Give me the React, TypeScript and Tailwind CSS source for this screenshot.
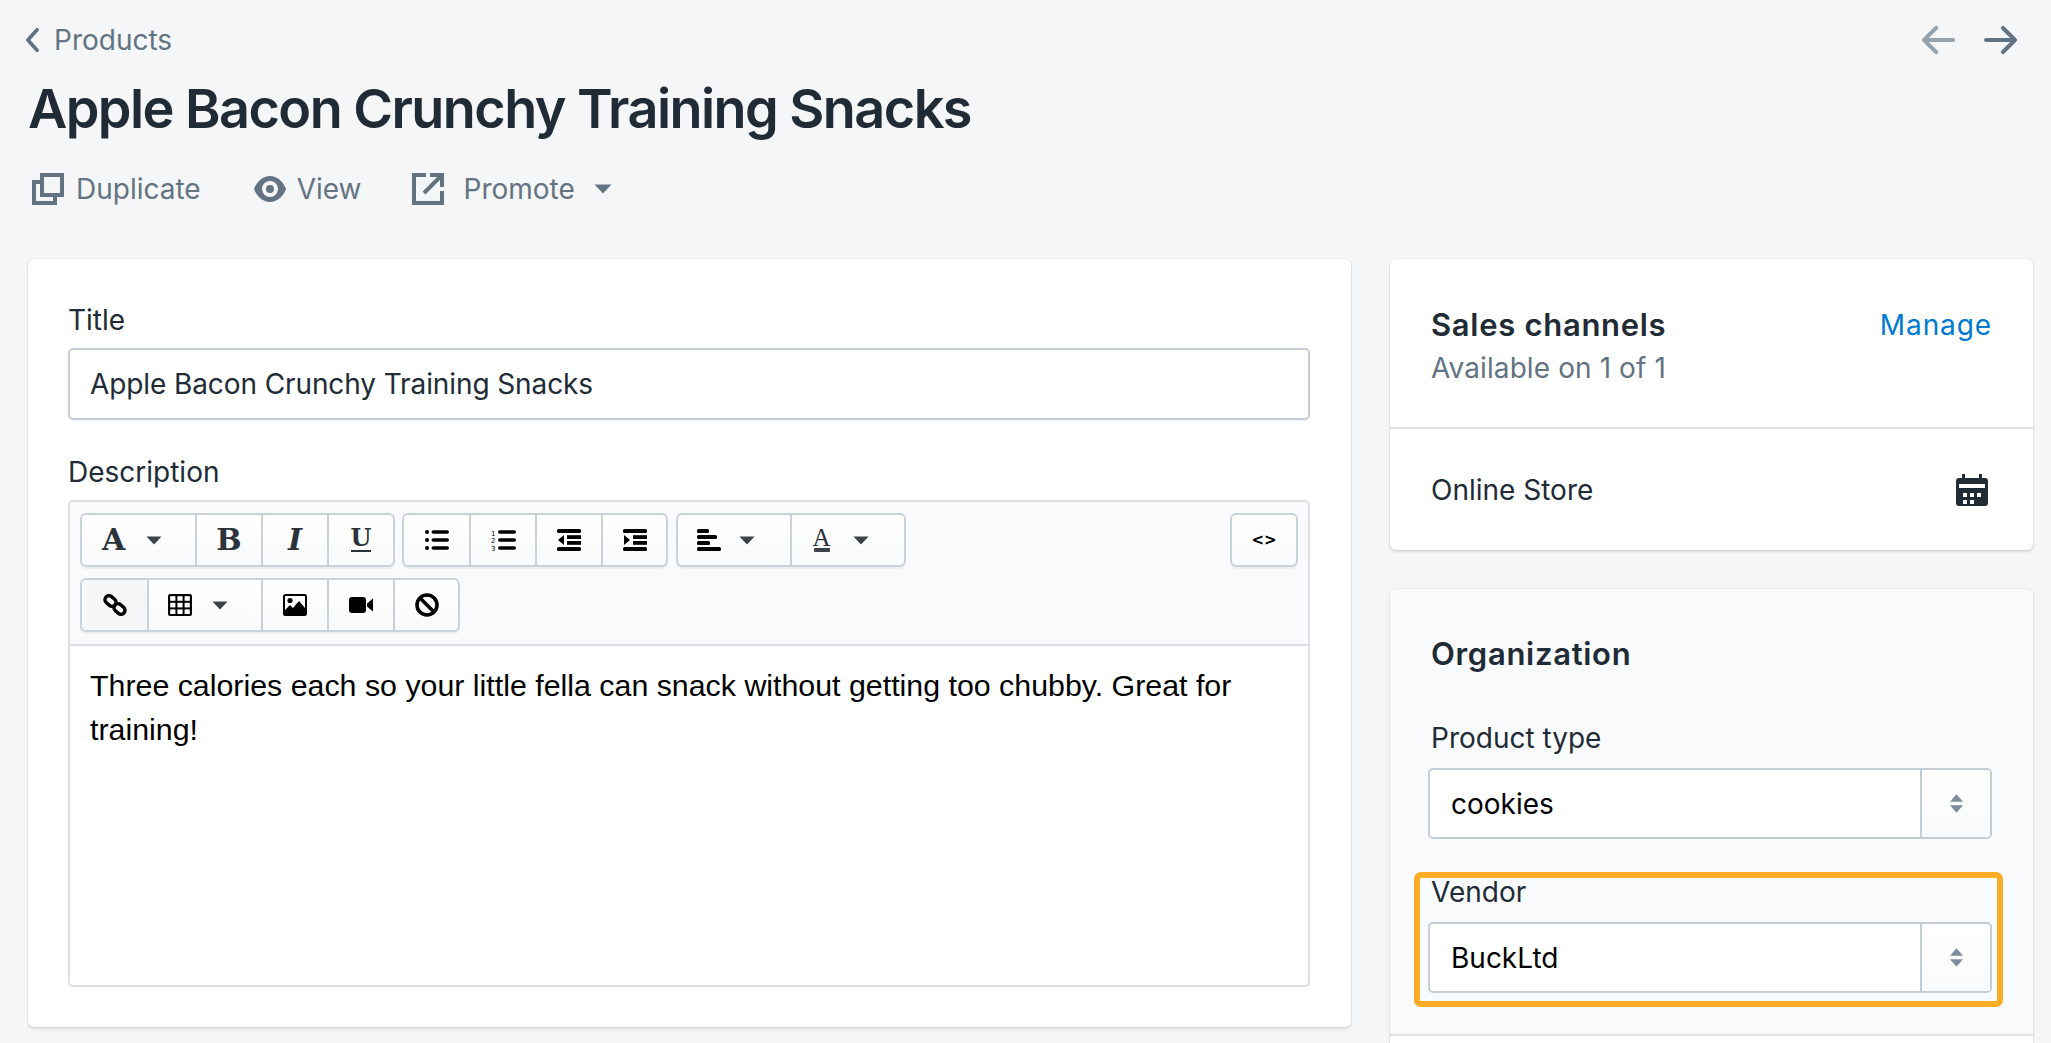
import React from 'react'

const Caret = ({ className = 'w-[16px] h-[9px] fill-[#3b4248]' }: { className?: string }) => (
  <svg viewBox="0 0 17 10" preserveAspectRatio="none" className={className}>
    <path d="M0.5 0.5h16l-8 9z" />
  </svg>
)

const ToolButton = ({ w, children, first }: { w: string; children: React.ReactNode; first?: boolean }) => (
  <div className={`${w} h-full flex items-center justify-center text-black ${first ? '' : 'border-l-2 border-[#c9d2da]'}`}>
    {children}
  </div>
)

const ToolGroup = ({ children }: { children: React.ReactNode }) => (
  <div className="flex h-[54px] rounded-[6px] border-2 border-[#c9d2da] bg-gradient-to-b from-white to-[#f9fafb] shadow-[0_2px_1px_rgba(22,29,37,0.05)] overflow-hidden">
    {children}
  </div>
)

const SelectBox = ({ value }: { value: string }) => (
  <div className="flex h-[71px] rounded-[5px] border-2 border-[#c4cdd5] bg-white overflow-hidden">
    <div className="flex-1 flex items-center pl-[21px] text-[28px] text-black">{value}</div>
    <div className="w-[70px] border-l-2 border-[#c4cdd5] bg-gradient-to-b from-white to-[#f9fafb] flex flex-col items-center justify-center gap-[3px]">
      <svg viewBox="0 0 12 7" className="w-[13px] h-[8px] fill-[#7c8c9c]"><path d="M6 0l6 7H0z" /></svg>
      <svg viewBox="0 0 12 7" className="w-[13px] h-[8px] fill-[#7c8c9c]"><path d="M6 7L0 0h12z" /></svg>
    </div>
  </div>
)

const serif = "font-['DejaVu_Serif',serif] font-bold text-[#2b323a]"

const UlIcon = () => (
  <svg viewBox="0 0 24 20" className="w-[24px] h-[20px] fill-black">
    <circle cx="2" cy="2" r="2" /><circle cx="2" cy="10" r="2" /><circle cx="2" cy="18" r="2" />
    <rect x="6.5" y="0.2" width="17.5" height="3.6" rx="1.8" /><rect x="6.5" y="8.2" width="17.5" height="3.6" rx="1.8" /><rect x="6.5" y="16.2" width="17.5" height="3.6" rx="1.8" />
  </svg>
)

const OlIcon = () => (
  <svg viewBox="0 0 25 22" className="w-[25px] h-[22px] fill-black">
    <text x="0" y="6.5" fontSize="7" fontFamily="DejaVu Sans">1</text>
    <text x="0" y="14" fontSize="7" fontFamily="DejaVu Sans">2</text>
    <text x="0" y="21.5" fontSize="7" fontFamily="DejaVu Sans">3</text>
    <rect x="7" y="1.2" width="18" height="3.6" rx="1.8" /><rect x="7" y="9.2" width="18" height="3.6" rx="1.8" /><rect x="7" y="17.2" width="18" height="3.6" rx="1.8" />
  </svg>
)

const OutdentIcon = ({ flip }: { flip?: boolean }) => (
  <svg viewBox="0 0 24 22" className="w-[24px] h-[22px] fill-black">
    <rect y="0" width="24" height="4" rx="1.5" /><rect y="18" width="24" height="4" rx="1.5" />
    <rect x="10" y="6.2" width="14" height="3.8" /><rect x="10" y="12" width="14" height="3.8" />
    {flip ? <path d="M1 6l6 5-6 5z" /> : <path d="M7 6v10l-6-5z" />}
  </svg>
)

const AlignIcon = () => (
  <svg viewBox="0 0 24 22" className="w-[24px] h-[22px] fill-black">
    <rect y="0" width="12" height="4" rx="1.5" /><rect y="6" width="20" height="4" rx="1.5" /><rect y="12" width="13" height="4" rx="1.5" /><rect y="18" width="24" height="4" rx="1.5" />
  </svg>
)

const LinkIcon = () => (
  <svg viewBox="0 0 24 24" className="w-[24px] h-[24px] fill-none stroke-black stroke-[3.4]">
    <rect x="1.5" y="4" width="12" height="8" rx="4" transform="rotate(40 7.5 8)" />
    <rect x="10.5" y="12" width="12" height="8" rx="4" transform="rotate(40 16.5 16)" />
  </svg>
)

const TableIcon = () => (
  <svg viewBox="0 0 24 22" className="w-[24px] h-[22px]">
    <rect width="24" height="22" rx="2" fill="#000" />
    {[2.2, 9.4, 16.6].map((x) => [2.2, 8.8, 15.4].map((y) => (
      <rect key={`${x}-${y}`} x={x} y={y} width="5.2" height="4.6" fill="#fff" />
    )))}
  </svg>
)

const ImageIcon = () => (
  <svg viewBox="0 0 24 22" className="w-[24px] h-[22px]">
    <rect x="1" y="1" width="22" height="20" rx="1.5" fill="#fff" stroke="#000" strokeWidth="2" />
    <circle cx="7" cy="6.5" r="2.6" fill="#000" />
    <path d="M2 20v-4l5-5 3 3 6-7 6 7v6z" fill="#000" />
  </svg>
)

const VideoIcon = () => (
  <svg viewBox="0 0 24 16" className="w-[24px] h-[16px] fill-black">
    <rect width="17" height="16" rx="3" /><path d="M18 6.5L24 1.5v13l-6-5z" />
  </svg>
)

const BanIcon = () => (
  <svg viewBox="0 0 24 24" className="w-[24px] h-[24px] fill-none stroke-black stroke-[3.6]">
    <circle cx="12" cy="12" r="10" /><path d="M5 5l14 14" />
  </svg>
)

export default function App() {
  return (
    <div className="relative w-[2051px] h-[1043px] overflow-hidden bg-[#f4f6f8] font-['Inter',sans-serif] text-[#212b36]">
      {/* Header */}
      <div className="pl-[28px] pr-[18px]">
        <div className="flex items-center justify-between h-[40px] pt-[20px] box-content">
          <div className="flex items-center text-[28px] text-[#637381]">
            <svg viewBox="0 0 16 26" className="w-[15px] h-[24px] -ml-[3px] mr-[14px] stroke-[#637381] fill-none stroke-[4]">
              <path d="M13 2L3 13l10 11" strokeLinecap="round" strokeLinejoin="round" />
            </svg>
            Products
          </div>
          <div className="flex items-center gap-[29px] mr-[15px]">
            <svg viewBox="0 0 34 28" className="w-[34px] h-[28px] fill-none stroke-[#95a3af] stroke-[4]">
              <path d="M32 14H3M15 2L3 14l12 12" strokeLinecap="round" strokeLinejoin="round" />
            </svg>
            <svg viewBox="0 0 34 28" className="w-[34px] h-[28px] fill-none stroke-[#637381] stroke-[4]">
              <path d="M2 14h29M19 2l12 12-12 12" strokeLinecap="round" strokeLinejoin="round" />
            </svg>
          </div>
        </div>
        <h1 className="text-[54px] leading-[70px] font-semibold tracking-[-1.56px] mt-[14px]">Apple Bacon Crunchy Training Snacks</h1>
        <div className="flex items-center text-[28px] text-[#637381] h-[34px] mt-[28px] pl-[4px]">
          <svg viewBox="0 0 32 32" className="w-[32px] h-[32px] fill-none stroke-[#637381] stroke-[4] mr-[12px]">
            <path d="M10 2h20v20H10z" />
            <path d="M10 9H2v21h21v-8" />
          </svg>
          <span>Duplicate</span>
          <svg viewBox="0 0 32 26" className="w-[32px] h-[26px] ml-[53px] mr-[11px]">
            <path fill="#637381" fillRule="evenodd" d="M16 0C8 0 2 7 0 13c2 6 8 13 16 13s14-7 16-13C30 7 24 0 16 0zm0 21a8 8 0 110-16 8 8 0 010 16z" />
            <circle cx="16" cy="13" r="4" fill="#637381" />
          </svg>
          <span>View</span>
          <svg viewBox="0 0 32 32" className="w-[32px] h-[32px] fill-none stroke-[#637381] stroke-[4] ml-[50px] mr-[20px]">
            <path d="M14 2H2v28h28V18" />
            <path d="M12 20L29 3M18 2h12v12" />
          </svg>
          <span>Promote</span>
          <Caret className="w-[18px] h-[10px] fill-[#637381] ml-[19px]" />
        </div>
      </div>

      {/* Content */}
      <div className="grid grid-cols-[1323px_643px] gap-x-[39px] ml-[28px] mt-[53px] items-start">
        {/* Left card */}
        <div className="h-[768px] bg-white rounded-[6px] shadow-[0_0_0_1px_rgba(63,63,68,0.05),0_2px_3px_0_rgba(63,63,68,0.15)] pl-[40px] pr-[41px] pt-[43px]">
          <div className="text-[28px] leading-[36px]">Title</div>
          <div className="h-[72px] mt-[10px] flex items-center rounded-[5px] border-2 border-[#c4cdd5] shadow-[0_1px_0_rgba(22,29,37,0.05)] pl-[20px] text-[28px] tracking-[-0.1px]">
            Apple Bacon Crunchy Training Snacks
          </div>
          <div className="text-[28px] leading-[36px] mt-[34px]">Description</div>
          <div className="h-[487px] mt-[10px] rounded-[5px] border-2 border-[#dbe0e5] overflow-hidden flex flex-col">
            <div className="h-[144px] shrink-0 bg-[#f9fafb] border-b-2 border-[#dcdfe3] pl-[10px] pr-[10px] pt-[11px]">
              <div className="flex">
                <ToolGroup>
                  <div className="w-[113px] h-full flex items-center pl-[20px]">
                    <span className={`${serif} text-[30px] leading-none`}>A</span>
                    <span className="ml-[21px]"><Caret /></span>
                  </div>
                  <ToolButton w="w-[66px]"><span className={`${serif} text-[30px] leading-none`}>B</span></ToolButton>
                  <ToolButton w="w-[66px]"><span className={`${serif} italic text-[30px] leading-none`}>I</span></ToolButton>
                  <ToolButton w="w-[66px]">
                    <span className="flex flex-col items-center">
                      <span className={`${serif} text-[24px] leading-[20px]`}>U</span>
                      <span className="w-[20px] h-[2px] bg-[#2b323a] mt-[2px]" />
                    </span>
                  </ToolButton>
                </ToolGroup>
                <div className="ml-[7px]">
                  <ToolGroup>
                    <ToolButton first w="w-[65px]"><UlIcon /></ToolButton>
                    <ToolButton w="w-[66px]"><OlIcon /></ToolButton>
                    <ToolButton w="w-[66px]"><OutdentIcon /></ToolButton>
                    <ToolButton w="w-[65px]"><OutdentIcon flip /></ToolButton>
                  </ToolGroup>
                </div>
                <div className="ml-[8px]">
                  <ToolGroup>
                    <div className="w-[112px] h-full flex items-center pl-[19px]">
                      <AlignIcon />
                      <span className="ml-[18px]"><Caret /></span>
                    </div>
                    <div className="w-[114px] h-full flex items-center border-l-2 border-[#c9d2da] pl-[21px]">
                      <span className="flex flex-col items-center w-[17px]">
                        <span className="font-['Liberation_Serif',serif] text-[25px] leading-[18px] text-[#2b323a]">A</span>
                        <span className="w-[16px] h-[4px] rounded-[1px] bg-[#3b4248] mt-[1px]" />
                      </span>
                      <span className="ml-[23px]"><Caret /></span>
                    </div>
                  </ToolGroup>
                </div>
                <div className="ml-auto">
                  <ToolGroup>
                    <ToolButton first w="w-[64px]"><span className="text-[15px] font-bold text-black font-['DejaVu_Sans',sans-serif]">&lt;&gt;</span></ToolButton>
                  </ToolGroup>
                </div>
              </div>
              <div className="flex mt-[11px]">
                <ToolGroup>
                  <div className="w-[65px] h-full flex items-center justify-center bg-[#f4f6f8]"><LinkIcon /></div>
                  <div className="w-[114px] h-full flex items-center border-l-2 border-[#c9d2da] pl-[19px]">
                    <TableIcon />
                    <span className="ml-[20px]"><Caret /></span>
                  </div>
                  <ToolButton w="w-[66px]"><ImageIcon /></ToolButton>
                  <ToolButton w="w-[66px]"><VideoIcon /></ToolButton>
                  <ToolButton w="w-[65px]"><BanIcon /></ToolButton>
                </ToolGroup>
              </div>
            </div>
            <div className="pl-[20px] pr-[10px] pt-[18px] text-[30.35px] leading-[44px] text-black font-['Liberation_Sans',sans-serif]">
              Three calories each so your little fella can snack without getting too chubby. Great for training!
            </div>
          </div>
        </div>

        {/* Right column */}
        <div className="flex flex-col gap-[39px]">
          <div className="h-[291px] bg-white rounded-[6px] shadow-[0_0_0_1px_rgba(63,63,68,0.05),0_2px_3px_0_rgba(63,63,68,0.15)]">
            <div className="h-[170px] border-b-2 border-[#dfe3e8] px-[41px] pt-[47px] flex justify-between items-start">
              <div>
                <div className="text-[31px] leading-[38px] font-semibold tracking-[0.7px]">Sales channels</div>
                <div className="text-[28px] leading-[36px] mt-[6px] text-[#637381] tracking-[0.1px]">Available on 1 of 1</div>
              </div>
              <div className="text-[28px] leading-[38px] text-[#007ace] tracking-[0.9px]">Manage</div>
            </div>
            <div className="h-[120px] pl-[41px] pr-[45px] pt-[2px] flex items-center justify-between text-[28px]">
              <span>Online Store</span>
              <svg viewBox="0 0 32 32" className="w-[32px] h-[32px]">
                <path fill="#212b36" fillRule="evenodd" d="M6 0h3v4h14V0h3v4h3a3 3 0 013 3v22a3 3 0 01-3 3H3a3 3 0 01-3-3V7a3 3 0 013-3h3zM3 10v4h26v-4zm4 9v4h4v-4zm7 0v4h4v-4zm7 0v4h4v-4zM7 26v4h4v-4zm7 0v4h4v-4z" />
              </svg>
            </div>
          </div>

          <div className="relative h-[500px] bg-[#f9fafb] rounded-t-[6px] shadow-[0_0_0_1px_rgba(63,63,68,0.05),0_2px_3px_0_rgba(63,63,68,0.15)] pl-[38px] pr-[41px] pt-[46px]">
            <div className="text-[31px] leading-[38px] font-semibold pl-[3px] tracking-[0.7px]">Organization</div>
            <div className="text-[28px] leading-[36px] mt-[47px] pl-[3px]">Product type</div>
            <div className="mt-[12px]"><SelectBox value="cookies" /></div>
            <div className="relative mt-[35px]">
              <div className="text-[28px] leading-[36px] pl-[3px]">Vendor</div>
              <div className="mt-[12px]"><SelectBox value="BuckLtd" /></div>
              <div className="absolute -left-[14px] -right-[11px] -top-[2px] -bottom-[14px] border-[6px] border-[#ffab25] rounded-[7px]" />
            </div>
            <div className="absolute left-0 right-0 top-[445px] bottom-0 bg-white border-t-2 border-[#dfe3e8]" />
          </div>
        </div>
      </div>
    </div>
  )
}
